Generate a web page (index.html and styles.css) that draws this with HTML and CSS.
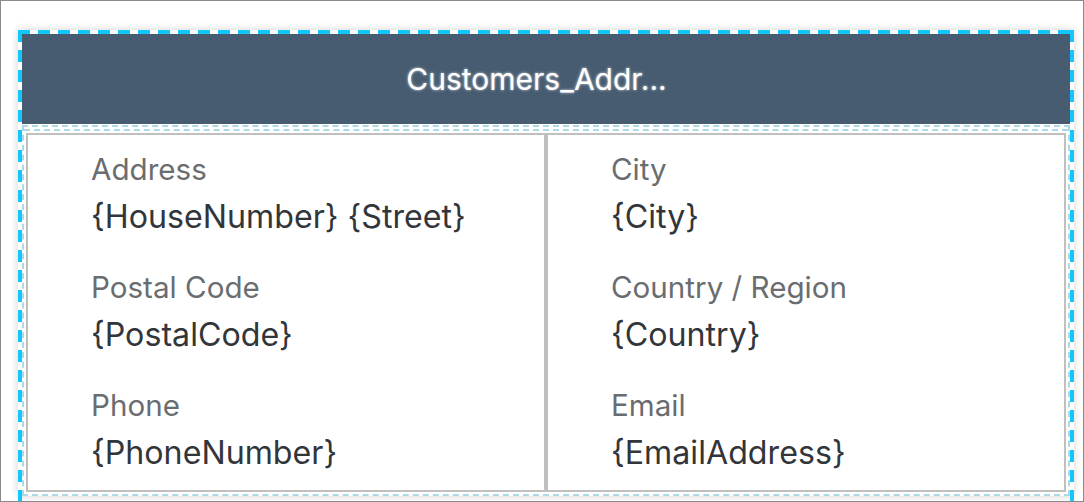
FILE: index.html
```html
<!DOCTYPE html>
<html lang="en">
<head>
<meta charset="utf-8">
<title>Customers_Address</title>
<link rel="stylesheet" href="styles.css">
</head>
<body>
<div class="page">
  <div class="card">
    <div class="header"><span class="title">Customers_Addr...</span></div>
    <div class="body">
      <div class="inner">
        <div class="table">
          <div class="col">
            <div class="field"><div class="label">Address</div><div class="value">{HouseNumber} {Street}</div></div>
            <div class="field"><div class="label">Postal Code</div><div class="value">{PostalCode}</div></div>
            <div class="field"><div class="label">Phone</div><div class="value">{PhoneNumber}</div></div>
          </div>
          <div class="divider"></div>
          <div class="col">
            <div class="field"><div class="label">City</div><div class="value">{City}</div></div>
            <div class="field"><div class="label">Country / Region</div><div class="value">{Country}</div></div>
            <div class="field"><div class="label">Email</div><div class="value">{EmailAddress}</div></div>
          </div>
        </div>
      </div>
    </div>
  </div>
</div>
</body>
</html>
```

FILE: styles.css
```css
* { box-sizing: border-box; }
html, body { margin: 0; padding: 0; background: #fff; }
body { font-family: Inter, "Liberation Sans", sans-serif; }

.page {
  width: 1084px;
  height: 502px;
  border: 1px solid #8a8a8a;
  padding: 29px 9px 0 17px;
  overflow: hidden;
}

.card {
  position: relative;
  width: 1056px;
  padding: 4px 4px 0 4px;
  background: #fff;
  box-shadow: 0 0 8px rgba(0, 0, 0, 0.18);
}

.card::after {
  content: "";
  position: absolute;
  left: 0; top: 0; right: 0; bottom: -20px;
  pointer-events: none;
  background:
    repeating-linear-gradient(90deg, #12c7fc 0 12px, transparent 12px 20px) top left / 100% 4px no-repeat,
    repeating-linear-gradient(180deg, #12c7fc 0 12px, transparent 12px 20px) top left / 4px 100% no-repeat,
    repeating-linear-gradient(180deg, #12c7fc 0 12px, transparent 12px 20px) top right / 4px 100% no-repeat;
}

.header {
  height: 90px;
  background: #475c71;
  display: flex;
  align-items: center;
  justify-content: center;
  padding-right: 19px;
}

.title {
  color: #fff;
  font-size: 30px;
  text-shadow: 0 0 3px rgba(255,255,255,0.75);
}

.body {
  margin: 1px -4px 0 0;
  width: 1048px;
  border: 2px dashed #add8e6;
  padding: 2px 0 2px 0;
}

.inner {
  border-top: 2px dashed #add8e6;
  padding: 2px 2px 0 2px;
}

.table {
  display: flex;
  border: 2px solid #c0c0c0;
}

.col {
  width: 516px;
  padding: 16px 0 17px 63px;
  display: flex;
  flex-direction: column;
  gap: 32px;
}

.divider {
  width: 4px;
  background: #c0c0c0;
}

.label {
  color: #6a6d70;
  font-size: 29.6px;
  line-height: 36px;
}

.value {
  color: #32363a;
  font-size: 32.2px;
  line-height: 40px;
  margin-top: 10px;
}
```
